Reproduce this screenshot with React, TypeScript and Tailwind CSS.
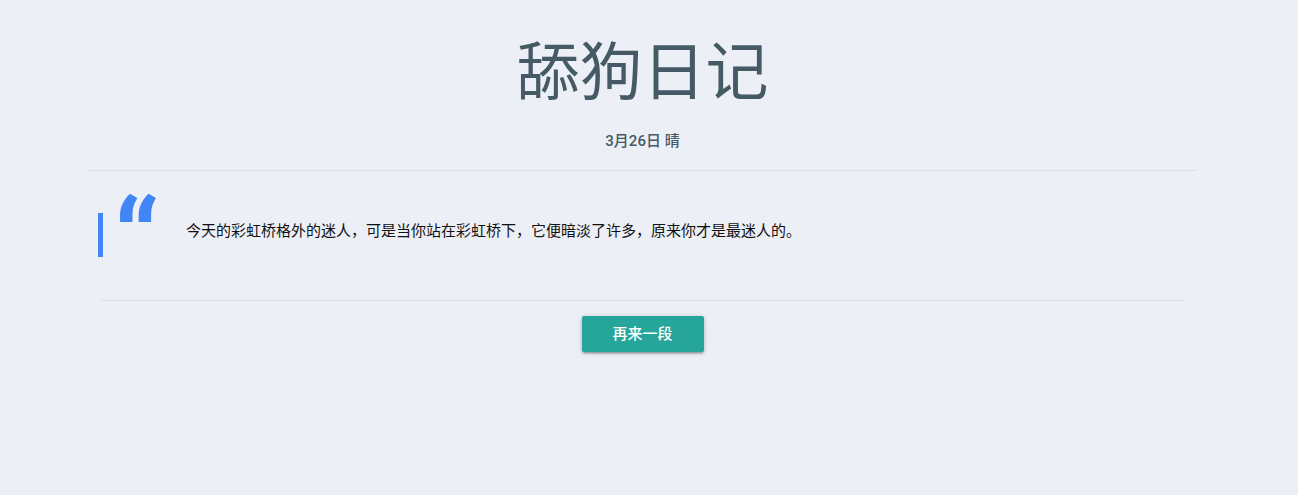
import React from "react";

export default function App() {
  return (
    <div className="min-h-screen w-full bg-[#eceff6] font-['Roboto','Noto_Sans_CJK_SC',sans-serif]">
      <div className="w-[1109px] ml-[88px]">
        <h1 className="pt-[38px] text-center text-[63px] leading-[70px] font-normal text-[#455a64]">
          舔狗日记
        </h1>
        <p className="mt-[23px] text-center text-[15px] leading-[20px] font-medium text-[#455a64]">
          3月26日 晴
        </p>
        <div className="mt-[19px] h-px bg-[#dcdfe3]" />
        <div className="px-[10px] pt-[42px]">
          <div className="relative border-l-[5px] border-[#4285f4] h-[44px] pl-[83px] flex items-center">
            <span className="absolute left-[11px] -top-[28px] text-[112px] leading-none font-bold text-[#4285f4] font-['Roboto',sans-serif]">
              “
            </span>
            <p className="-mt-[8px] text-[15px] leading-[21px] text-[#111]">
              今天的彩虹桥格外的迷人，可是当你站在彩虹桥下，它便暗淡了许多，原来你才是最迷人的。
            </p>
          </div>
        </div>
        <div className="mx-[12px] mt-[43px] h-px bg-[#dcdfe3]" />
        <div className="flex justify-center pt-[15px]">
          <button className="w-[122px] h-[36px] rounded-[2px] bg-[#26a69a] text-white text-[15px] font-medium shadow-[0_2px_2px_0_rgba(0,0,0,0.14),0_3px_1px_-2px_rgba(0,0,0,0.12),0_1px_5px_0_rgba(0,0,0,0.2)]">
            再来一段
          </button>
        </div>
      </div>
    </div>
  );
}
